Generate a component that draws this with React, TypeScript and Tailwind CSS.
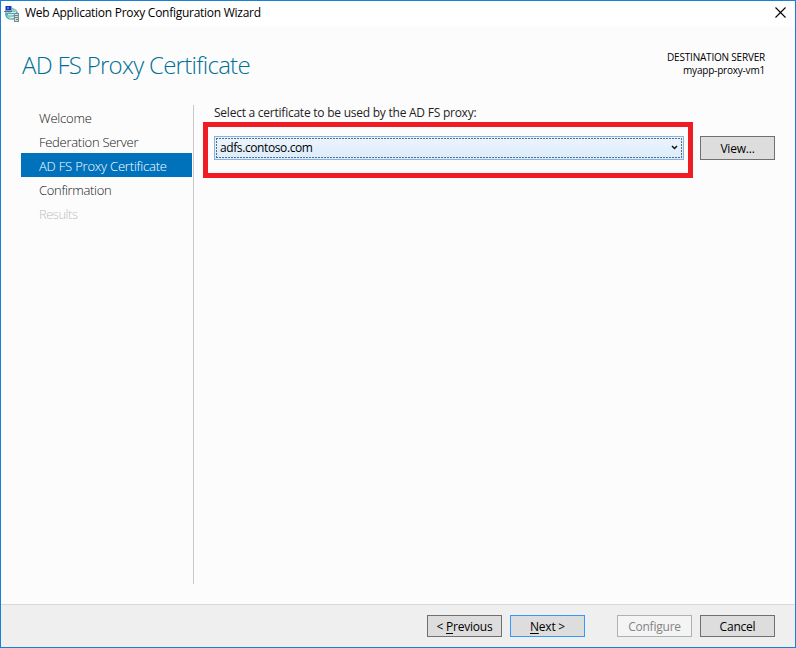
import type { ReactNode } from "react";

const steps = [
  { label: "Welcome", look: "text-[#161616] tracking-[-0.2px]" },
  { label: "Federation Server", look: "text-[#161616] tracking-[-0.28px]" },
  { label: "AD FS Proxy Certificate", look: "bg-[#0072bc] text-white tracking-[-0.2px]" },
  { label: "Confirmation", look: "text-[#161616] tracking-[-0.32px]" },
  { label: "Results", look: "text-[#bcbcbc] tracking-[-0.5px]" },
];

function ProxyIcon() {
  return (
    <svg className="h-4 w-4 shrink-0" viewBox="0 0 16 16" shapeRendering="crispEdges">
      <ellipse cx="7.500" cy="8" rx="6.500" ry="6" fill="#4da9cb" shapeRendering="auto" />
      <path d="M8 3h3l2 3-3 1-3-2zM3 9h5l2 2-3 3-4-3z" fill="#8fd0b4" />
      <path d="M7 6h5v1H7zM4 8h6v1H4zM6 11h4v1H6z" fill="#cdeef4" />
      <path d="M1 0h7v5H1z" fill="#8a9fc6" />
      <path d="M2 0h5v4H2z" fill="#1c35b4" />
      <path d="M3 1h2v2H3z" fill="#4a83e6" />
      <path d="M0 5h8v1H0z" fill="#586f8c" />
      <path d="M1 6h6v1H1z" fill="#b8c6d0" />
      <path d="M11 7h4v9h-5V8h1z" fill="#7f8b91" />
      <path d="M11 8h3v7h-3z" fill="#d5dbdc" />
      <path d="M11 9h3v1h-3zM11 11h3v1h-3z" fill="#75838a" />
      <path d="M12 13h2v1h-2z" fill="#38a43c" />
    </svg>
  );
}

function Button({ children, look = "border-[#707070] bg-[#dddddd] text-black", size = "h-[22px]" }: { children: ReactNode; look?: string; size?: string }) {
  return (
    <button className={`flex w-[75px] shrink-0 items-center justify-center border pt-[2px] text-[12px] leading-4 tracking-[-0.22px] whitespace-nowrap ${size} ${look}`}>
      {children}
    </button>
  );
}

export default function App() {
  return (
    <div className="flex h-[648px] w-[796px] flex-col overflow-hidden border border-[#1a80d4] bg-[#fcfcfc] font-['Open_Sans','Noto_Sans',sans-serif] text-[12px] text-black">
      <header className="flex h-[25px] shrink-0 items-center bg-white pr-[9px] pl-[3px]">
        <ProxyIcon />
        <h1 className="ml-[5px] flex-1 pb-[2px] text-[12px] leading-4 tracking-[-0.27px] whitespace-nowrap">Web Application Proxy Configuration Wizard</h1>
        <svg className="mb-[2px] h-[11px] w-[11px]" viewBox="0 0 11 11">
          <path d="M.5.5l10 10M10.500.5l-10 10" stroke="black" strokeWidth="1.1" />
        </svg>
      </header>

      <section className="flex h-[79px] shrink-0 justify-between pr-[30px] pl-[21px]">
        <h2 className="pt-[23px] text-[24px] leading-8 font-light tracking-[-0.72px] whitespace-nowrap text-[#007096]">AD FS Proxy Certificate</h2>
        <div className="pt-[25px] text-right text-[10px] leading-[13px] whitespace-nowrap">
          <p className="tracking-[-0.2px]">DESTINATION SERVER</p>
          <p className="tracking-[-0.2px]">myapp-proxy-vm1</p>
        </div>
      </section>

      <main className="flex min-h-0 flex-1">
        <nav className="ml-[20px] flex h-[479px] w-[173px] shrink-0 flex-col border-r border-[#c8c8c8] pr-px">
          {steps.map((step) => (
            <div key={step.label} className={`flex h-6 shrink-0 items-center pt-[4px] pl-[18px] text-[13px] font-light whitespace-nowrap ${step.look}`}>
              {step.label}
            </div>
          ))}
        </nav>
        <section className="flex-1 pr-[20px] pl-[20px]">
          <p className="text-[12px] leading-4 tracking-[-0.24px] whitespace-nowrap text-[#1e1e1e]">Select a certificate to be used by the AD FS proxy:</p>
          <div className="mt-[15px] flex gap-4">
            <div className="relative flex-1">
              <div className="flex h-6 border border-[#7eb4ea] bg-linear-to-b from-[#ebf4fc] to-[#dcecfc] p-px">
                <div className="relative flex flex-1 items-center justify-between pr-[4px] pl-[4px]">
                  <svg className="absolute inset-0 h-full w-full" viewBox="0 0 466 20" preserveAspectRatio="none" shapeRendering="crispEdges">
                    <path d="M0 .5h466M0 19.500h466M.5 0v20M465.500 0v20" stroke="#666b73" strokeDasharray="2 1" />
                  </svg>
                  <span className="pb-px leading-4 tracking-[-0.4px]">adfs.contoso.com</span>
                  <svg className="mb-[2px] h-[5px] w-[7px]" viewBox="0 0 7 5">
                    <path d="M1 1l2.500 2.500L6 1" fill="none" stroke="#111" strokeWidth="1.5" />
                  </svg>
                </div>
              </div>
              <div className="pointer-events-none absolute -top-[14px] -right-[9px] -bottom-[18px] -left-[11px] border-5 border-[#ef1c24]" />
            </div>
            <Button size="h-6">View...</Button>
          </div>
        </section>
      </main>

      <footer className="flex h-[43px] shrink-0 justify-end gap-2 border-t border-[#d9d9d9] bg-[#efefef] pt-[10px] pr-[20px]">
        <Button>&lt;&nbsp;<span className="underline underline-offset-2">P</span>revious</Button>
        <Button look="border-[#3399ff] bg-[#dddddd] text-black"><span className="underline underline-offset-2">N</span>ext &gt;</Button>
        <div className="w-4" />
        <Button look="border-[#adb2b5] bg-[#f4f4f4] text-[#838383]">Configure</Button>
        <Button>Cancel</Button>
      </footer>
    </div>
  );
}
